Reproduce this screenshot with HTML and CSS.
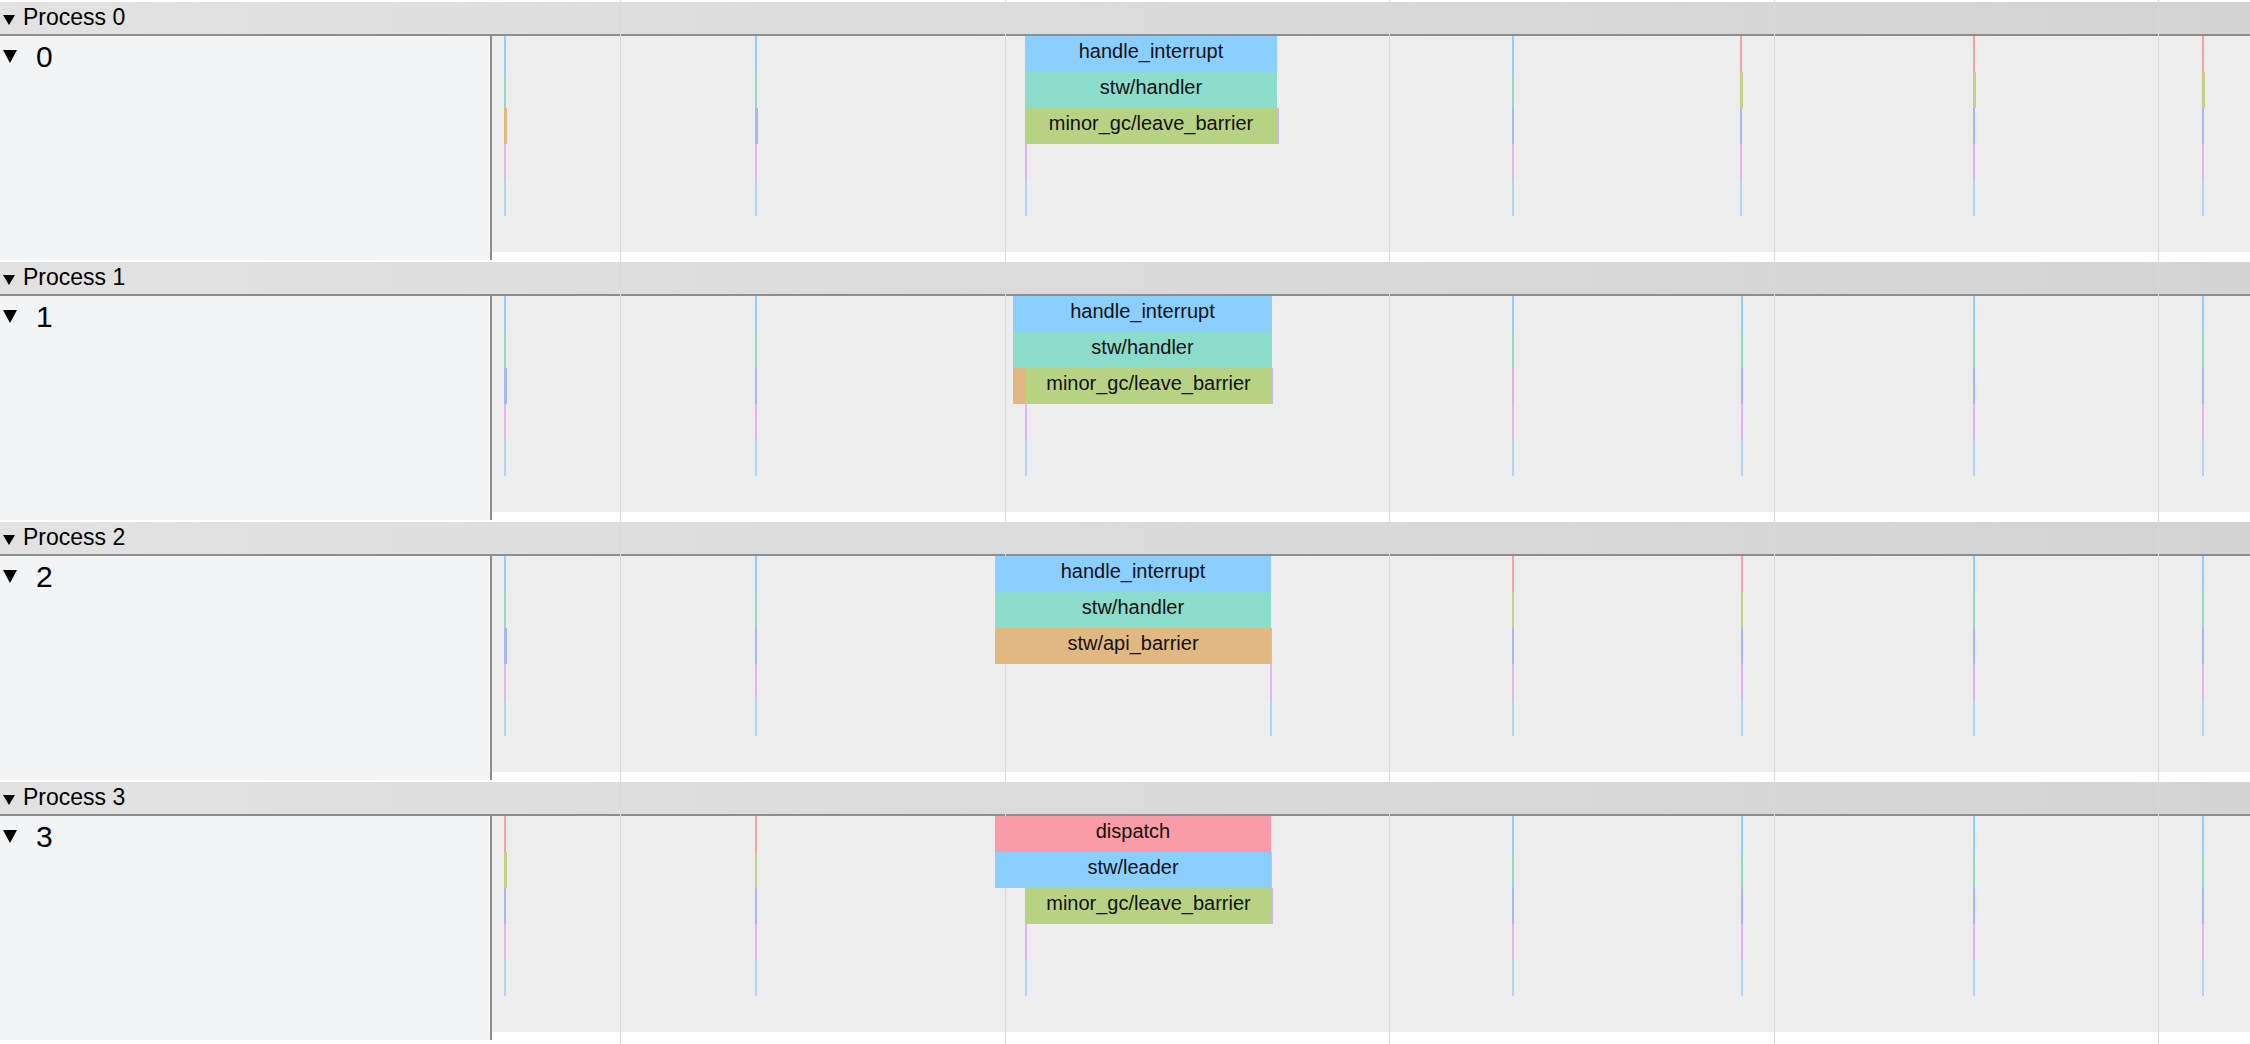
FILE: index.html
```html
<!DOCTYPE html>
<html>
<head>
<meta charset="utf-8">
<link rel="stylesheet" href="styles.css">
</head>
<body>
<div class="gridlines">
  <div class="gl" style="left:620px"></div>
  <div class="gl" style="left:1005px"></div>
  <div class="gl" style="left:1389px"></div>
  <div class="gl" style="left:1774px"></div>
  <div class="gl" style="left:2158px"></div>
</div>

<!-- Process 0 -->
<section class="process">
  <div class="proc-head">
    <svg class="tri-s" viewBox="0 0 12 10"><polygon points="0,0 12,0 6,10"/></svg>
    <span class="proc-title">Process 0</span>
  </div>
  <div class="thread">
    <div class="thread-label">
      <svg class="tri-l" viewBox="0 0 14 13"><polygon points="0,0 14,0 7,13"/></svg>
      <span class="tid">0</span>
    </div>
    <div class="track">
      <div class="lane"></div>
      <div class="tick" style="left:12px"><i class="b"></i><i class="t"></i><i class="ol w3"></i><i class="p"></i><i class="lb"></i></div>
      <div class="tick" style="left:263px"><i class="b"></i><i class="t"></i><i class="l w3"></i><i class="p"></i><i class="lb"></i></div>
      <div class="tick from3" style="left:533px"><i class="p"></i><i class="lb"></i></div>
      <div class="tick" style="left:1020px"><i class="b"></i><i class="t"></i><i class="l"></i><i class="p"></i><i class="lb"></i></div>
      <div class="tick" style="left:1248px"><i class="r"></i><i class="g w3"></i><i class="l"></i><i class="p"></i><i class="lb"></i></div>
      <div class="tick" style="left:1481px"><i class="r"></i><i class="g w3"></i><i class="l"></i><i class="p"></i><i class="lb"></i></div>
      <div class="tick" style="left:1710px"><i class="r"></i><i class="g w3"></i><i class="l"></i><i class="p"></i><i class="lb"></i></div>
      <div class="slice c-blue lv0" style="left:533px;width:252px">handle_interrupt</div>
      <div class="slice c-teal lv1" style="left:533px;width:252px">stw/handler</div>
      <div class="slice c-lav lv2" style="left:785px;width:2px"></div>
      <div class="slice c-green lv2" style="left:533px;width:252px">minor_gc/leave_barrier</div>
    </div>
  </div>
</section>

<!-- Process 1 -->
<section class="process">
  <div class="proc-head">
    <svg class="tri-s" viewBox="0 0 12 10"><polygon points="0,0 12,0 6,10"/></svg>
    <span class="proc-title">Process 1</span>
  </div>
  <div class="thread">
    <div class="thread-label">
      <svg class="tri-l" viewBox="0 0 14 13"><polygon points="0,0 14,0 7,13"/></svg>
      <span class="tid">1</span>
    </div>
    <div class="track">
      <div class="lane"></div>
      <div class="tick" style="left:12px"><i class="b"></i><i class="t"></i><i class="l w3"></i><i class="p"></i><i class="lb"></i></div>
      <div class="tick" style="left:263px"><i class="b"></i><i class="t"></i><i class="l"></i><i class="p"></i><i class="lb"></i></div>
      <div class="tick from3" style="left:533px"><i class="p"></i><i class="lb"></i></div>
      <div class="tick" style="left:1020px"><i class="b"></i><i class="t"></i><i class="pk"></i><i class="p"></i><i class="lb"></i></div>
      <div class="tick" style="left:1249px"><i class="b"></i><i class="t"></i><i class="l"></i><i class="p"></i><i class="lb"></i></div>
      <div class="tick" style="left:1481px"><i class="b"></i><i class="t"></i><i class="l"></i><i class="p"></i><i class="lb"></i></div>
      <div class="tick" style="left:1710px"><i class="b"></i><i class="t"></i><i class="l"></i><i class="p"></i><i class="lb"></i></div>
      <div class="slice c-blue lv0" style="left:521px;width:259px">handle_interrupt</div>
      <div class="slice c-teal lv1" style="left:521px;width:259px">stw/handler</div>
      <div class="slice c-orange lv2" style="left:521px;width:12px"></div>
      <div class="slice c-lav lv2" style="left:780px;width:1px"></div>
      <div class="slice c-green lv2" style="left:533px;width:247px">minor_gc/leave_barrier</div>
    </div>
  </div>
</section>

<!-- Process 2 -->
<section class="process">
  <div class="proc-head">
    <svg class="tri-s" viewBox="0 0 12 10"><polygon points="0,0 12,0 6,10"/></svg>
    <span class="proc-title">Process 2</span>
  </div>
  <div class="thread">
    <div class="thread-label">
      <svg class="tri-l" viewBox="0 0 14 13"><polygon points="0,0 14,0 7,13"/></svg>
      <span class="tid">2</span>
    </div>
    <div class="track">
      <div class="lane"></div>
      <div class="tick" style="left:12px"><i class="b"></i><i class="t"></i><i class="l w3"></i><i class="p"></i><i class="lb"></i></div>
      <div class="tick" style="left:263px"><i class="b"></i><i class="t"></i><i class="l"></i><i class="p"></i><i class="lb"></i></div>
      <div class="tick from3" style="left:778px"><i class="p"></i><i class="lb"></i></div>
      <div class="tick" style="left:1020px"><i class="r"></i><i class="g"></i><i class="l"></i><i class="p"></i><i class="lb"></i></div>
      <div class="tick" style="left:1249px"><i class="r"></i><i class="g"></i><i class="l"></i><i class="p"></i><i class="lb"></i></div>
      <div class="tick" style="left:1481px"><i class="b"></i><i class="t"></i><i class="l"></i><i class="p"></i><i class="lb"></i></div>
      <div class="tick" style="left:1710px"><i class="b"></i><i class="t"></i><i class="l"></i><i class="p"></i><i class="lb"></i></div>
      <div class="slice c-blue lv0" style="left:503px;width:276px">handle_interrupt</div>
      <div class="slice c-teal lv1" style="left:503px;width:276px">stw/handler</div>
      <div class="slice c-lav lv2" style="left:779px;width:1px"></div>
      <div class="slice c-orange lv2" style="left:503px;width:276px">stw/api_barrier</div>
    </div>
  </div>
</section>

<!-- Process 3 -->
<section class="process">
  <div class="proc-head">
    <svg class="tri-s" viewBox="0 0 12 10"><polygon points="0,0 12,0 6,10"/></svg>
    <span class="proc-title">Process 3</span>
  </div>
  <div class="thread">
    <div class="thread-label">
      <svg class="tri-l" viewBox="0 0 14 13"><polygon points="0,0 14,0 7,13"/></svg>
      <span class="tid">3</span>
    </div>
    <div class="track">
      <div class="lane"></div>
      <div class="tick" style="left:12px"><i class="r"></i><i class="g w3"></i><i class="l"></i><i class="p"></i><i class="lb"></i></div>
      <div class="tick" style="left:263px"><i class="r"></i><i class="g"></i><i class="l"></i><i class="p"></i><i class="lb"></i></div>
      <div class="tick from3" style="left:533px"><i class="p"></i><i class="lb"></i></div>
      <div class="tick" style="left:1020px"><i class="b"></i><i class="t"></i><i class="l"></i><i class="p"></i><i class="lb"></i></div>
      <div class="tick" style="left:1249px"><i class="b"></i><i class="t"></i><i class="l"></i><i class="p"></i><i class="lb"></i></div>
      <div class="tick" style="left:1481px"><i class="b"></i><i class="t"></i><i class="l"></i><i class="p"></i><i class="lb"></i></div>
      <div class="tick" style="left:1710px"><i class="b"></i><i class="t"></i><i class="l"></i><i class="p"></i><i class="lb"></i></div>
      <div class="slice c-red lv0" style="left:503px;width:276px">dispatch</div>
      <div class="slice c-olive lv1" style="left:779px;width:1px"></div>
      <div class="slice c-blue lv1" style="left:503px;width:276px">stw/leader</div>
      <div class="slice c-lav lv2" style="left:780px;width:1px"></div>
      <div class="slice c-green lv2" style="left:533px;width:247px">minor_gc/leave_barrier</div>
    </div>
  </div>
</section>
</body>
</html>
```

FILE: styles.css
```css
html, body {
  margin: 0;
  padding: 0;
  background: #ffffff;
  font-family: "Liberation Sans", Arial, sans-serif;
  color: #000;
  overflow: hidden;
}

body {
  position: relative;
  width: 2250px;
  height: 1044px;
}

.gridlines {
  position: absolute;
  top: 0;
  left: 0;
  width: 100%;
  height: 100%;
  z-index: 1;
  pointer-events: none;
}

.gl {
  position: absolute;
  top: 0;
  bottom: 0;
  width: 1px;
  background: #dadada;
}

.process {
  margin-top: 2px;
}

.proc-head {
  height: 32px;
  border-bottom: 2px solid #8e8e8e;
  background: linear-gradient(to right, #e2e2e2, #d3d3d3);
  display: flex;
  align-items: center;
  padding-left: 3px;
  box-sizing: content-box;
}

.tri-s {
  width: 12px;
  height: 10px;
  fill: #000;
  margin-top: 3px;
}

.proc-title {
  font-size: 23px;
  margin-left: 8px;
  line-height: 32px;
  position: relative;
  top: -1px;
}

.thread {
  display: flex;
  height: 224px;
}

.thread-label {
  width: 490px;
  flex: none;
  background: #f3f4f6;
  border-right: 2px solid #8e8e8e;
  display: flex;
  align-items: flex-start;
  padding-left: 3px;
  box-sizing: border-box;
  width: 492px;
}

.tri-l {
  width: 14px;
  height: 13px;
  fill: #000;
  margin-top: 14px;
}

.tid {
  font-size: 30px;
  line-height: 34px;
  margin-left: 19px;
  margin-top: 4px;
}

.track {
  flex: 1;
  position: relative;
}

.lane {
  height: 216px;
  background: #ededed;
}

.tick {
  position: absolute;
  top: 0;
  z-index: 2;
  display: flex;
  flex-direction: column;
  width: 2px;
}

.tick.from3 {
  padding-top: 108px;
}

.tick i {
  display: block;
  height: 36px;
  width: 2px;
}

.tick i.w3 { width: 3px; }

.tick .b  { background: #8acfff; }
.tick .t  { background: #8cdcc8; }
.tick .ol { background: #e0b880; }
.tick .l  { background: #a9b5f9; }
.tick .pk { background: #e7a9ef; }
.tick .p  { background: #e3b3f6; }
.tick .lb { background: #add5f9; }
.tick .r  { background: #f7a0aa; }
.tick .g  { background: #c8cf86; }

.slice {
  position: absolute;
  z-index: 3;
  height: 36px;
  line-height: 30px;
  font-size: 20px;
  text-align: center;
  white-space: nowrap;
  overflow: hidden;
  color: #111;
}

.lv0 { top: 0; }
.lv1 { top: 36px; }
.lv2 { top: 72px; }

.c-blue   { background: #8acfff; }
.c-teal   { background: #8cdccb; }
.c-green  { background: #b8d284; }
.c-orange { background: #e2b882; }
.c-red    { background: #f99ca8; }
.c-lav    { background: #c9b6ee; }
.c-olive  { background: #c8cf86; }
```
